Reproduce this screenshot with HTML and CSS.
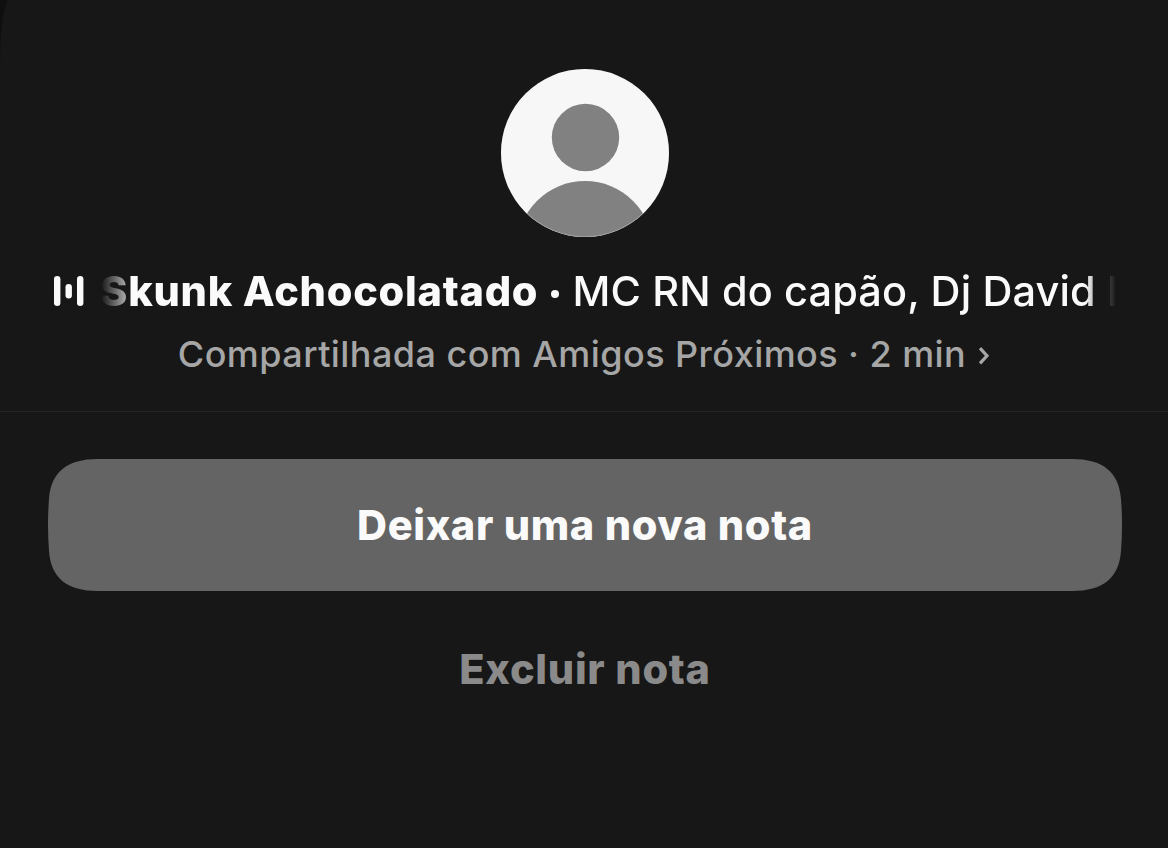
FILE: index.html
```html
<!DOCTYPE html>
<html lang="pt-BR">
<head>
<meta charset="utf-8">
<title>Nota</title>
<link rel="stylesheet" href="styles.css">
</head>
<body>
<main class="sheet">
  <header class="note">
    <svg class="avatar" viewBox="0 0 168 168" aria-hidden="true">
      <defs><clipPath id="disc"><circle cx="84" cy="84" r="84"/></clipPath></defs>
      <g clip-path="url(#disc)">
        <rect class="avatar-bg" width="168" height="168"/>
        <circle class="avatar-fg" cx="84.5" cy="68.5" r="33.7"/>
        <circle class="avatar-fg" cx="84" cy="180" r="68"/>
      </g>
      <circle class="avatar-rim" cx="84" cy="84" r="83.6"/>
    </svg>
    <div class="music">
      <svg class="bars" viewBox="0 0 32 32" aria-hidden="true">
        <rect x="1" y="1" width="6.4" height="30" rx="3.2"/>
        <rect x="12.5" y="9" width="6.4" height="14.5" rx="3.2"/>
        <rect x="24" y="1" width="6.4" height="30" rx="3.2"/>
      </svg>
      <div class="ticker"><span class="song">Skunk Achocolatado</span><span class="dot"></span><span class="artist">MC RN do capão, Dj David</span><span class="artist-next">I</span></div>
    </div>
    <p class="audience"><span class="shared">Compartilhada com Amigos Próximos · 2 min</span><svg class="chevron" viewBox="0 0 12 18" aria-hidden="true"><path d="M2 1.2 9 8.8 2 16.4"/></svg></p>
  </header>
  <div class="actions">
    <button class="primary"><svg class="plate" viewBox="0 0 1074 132" aria-hidden="true"><path d="M50 0H1024C1055 0 1071 13 1073 40Q1074 53 1074 66T1073 92C1071 119 1055 132 1024 132H50C19 132 3 119 1 92Q0 79 0 66T1 40C3 13 19 0 50 0Z"/></svg><span class="label">Deixar uma nova nota</span></button>
    <button class="secondary"><span class="label">Excluir nota</span></button>
  </div>
</main>
</body>
</html>
```
FILE: styles.css
```css
*{box-sizing:border-box}
body{margin:0;background:#0f0f0f;font-family:Inter,"Liberation Sans",sans-serif;color:#fafafa}
.sheet{height:848px;background:#171717;overflow:hidden;border-top-left-radius:9px 66px}
.note{height:412px;padding-top:69px;border-bottom:1px solid #232323;display:flex;flex-direction:column;align-items:center}
.avatar{width:168px;height:168px;display:block;margin-left:2px}
.avatar-bg{fill:#f7f7f7}
.avatar-fg{fill:#818181}
.avatar-rim{fill:none;stroke:#fff;stroke-opacity:.25;stroke-width:.8}
.music{display:flex;align-items:center;align-self:stretch;margin:28px 48px 0 53px;height:52px}
.bars{width:32px;height:32px;fill:#fafafa;flex:none}
.ticker{flex:1;min-width:0;margin-left:14px;padding-left:1px;height:52px;line-height:52px;font-size:41.5px;white-space:nowrap;overflow:hidden;display:flex;align-items:center;mask-image:linear-gradient(90deg,transparent 2px,rgba(0,0,0,.65) 27px,#000 29px,#000 calc(100% - 34px),rgba(0,0,0,.12) calc(100% - 9px),transparent calc(100% - 3px))}
.ticker>*{flex:none}
.song{font-weight:800;letter-spacing:.74px;width:439px}
.dot{width:8.5px;height:8.5px;border-radius:50%;background:#fafafa;margin:6px 13.5px 0 11.5px}
.artist,.artist-next{font-weight:500;letter-spacing:.11px}
.artist-next{margin-left:11px}
.audience{margin:12px 0 0;height:50px;line-height:50px;font-size:36px;font-weight:500;letter-spacing:.44px;color:#a6a6a6;white-space:nowrap;display:flex;align-items:center}
.chevron{width:12px;height:18px;margin-left:12px;margin-top:4px;fill:none;stroke:#a6a6a6;stroke-width:3.2}
.actions{padding:47px 46px 0 48px;display:flex;flex-direction:column}
button{border:0;background:none;padding:0;font:800 41.5px Inter,"Liberation Sans",sans-serif;letter-spacing:.65px;color:#fafafa;display:grid;place-items:center}
.primary{height:132px}
.primary>*{grid-area:1/1}
.plate{width:100%;height:132px;fill:#646464}
.secondary{height:80px;margin-top:38px;letter-spacing:.72px;color:#8a8a8a}
```
